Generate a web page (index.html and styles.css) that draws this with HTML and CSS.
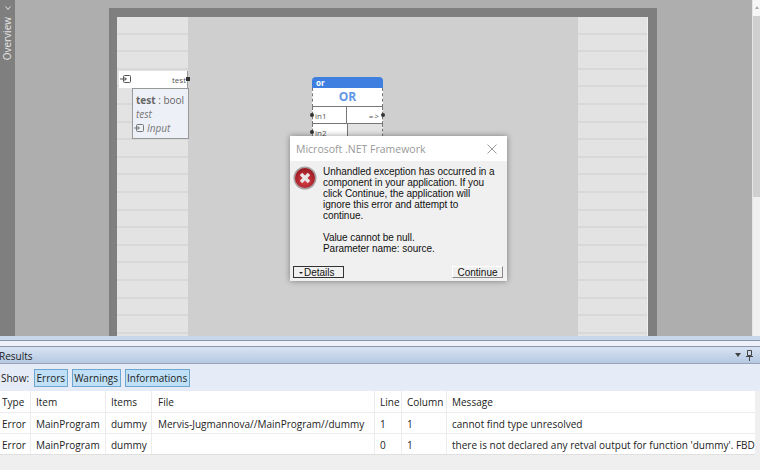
FILE: index.html
```html
<!DOCTYPE html>
<html>
<head>
  <meta charset="utf-8" />
  <title>Results</title>
  <link rel="stylesheet" href="styles.css">
</head>
<body>
  <div class="top">
    <div class="overview">
      <svg class="chev" width="6" height="4" viewBox="0 0 6 4"><path d="M0.500 0.500L3 3.500L5.500 0.500" fill="none" stroke="#e6e6e6"/></svg>
      <span class="overview-label">Overview</span>
    </div>
    <div class="stage">
      <div class="sheet">
        <div class="rail">
          <div class="rail-row"></div><div class="rail-row"></div><div class="rail-row"></div><div class="rail-row"></div><div class="rail-row"></div><div class="rail-row"></div><div class="rail-row"></div><div class="rail-row"></div><div class="rail-row"></div><div class="rail-row"></div><div class="rail-row"></div><div class="rail-row"></div><div class="rail-row"></div><div class="rail-row"></div><div class="rail-row"></div><div class="rail-row"></div><div class="rail-row"></div><div class="rail-row"></div>
        </div>
        <div class="sheet-mid"></div>
        <div class="rail rail-right">
          <div class="rail-row"></div><div class="rail-row"></div><div class="rail-row"></div><div class="rail-row"></div><div class="rail-row"></div><div class="rail-row"></div><div class="rail-row"></div><div class="rail-row"></div><div class="rail-row"></div><div class="rail-row"></div><div class="rail-row"></div><div class="rail-row"></div><div class="rail-row"></div><div class="rail-row"></div><div class="rail-row"></div><div class="rail-row"></div><div class="rail-row"></div><div class="rail-row"></div>
        </div>
      </div>

      <div class="var-row">
        <svg class="port-icon" width="11" height="9" viewBox="0 0 11 9"><rect x="3.500" y="0.500" width="7" height="7" rx="1" fill="none" stroke="#555"/><path d="M0 4h6M4.500 2.500L6.500 4L4.500 5.500" fill="none" stroke="#555"/></svg>
        <span class="var-name">test</span>
        <span class="pin pin-var"></span>
      </div>
      <div class="tip">
        <div><b>test</b> : bool</div>
        <div class="tip-em">test</div>
        <div class="tip-em tip-input">
          <svg class="tip-icon" width="10" height="9" viewBox="0 0 10 9"><rect x="2.500" y="0.500" width="7" height="7" rx="1" fill="none" stroke="#777"/><path d="M0 4h5M3.500 2.500L5.500 4L3.500 5.500" fill="none" stroke="#777"/></svg>
          Input
        </div>
      </div>

      <div class="block">
        <div class="block-head">or</div>
        <div class="block-title">OR</div>
        <div class="block-row">
          <div class="cell">in1<span class="pin pin-l"></span></div>
          <div class="cell cell-out">=&gt;<span class="pin pin-r"></span></div>
        </div>
        <div class="block-row">
          <div class="cell">in2<span class="pin pin-l"></span></div>
          <div class="cell cell-empty"></div>
        </div>
      </div>

      <div class="dialog">
        <div class="dialog-title">
          <span>Microsoft .NET Framework</span>
          <svg width="10" height="10" viewBox="0 0 10 10"><path d="M0.500 0.500L9.500 9.500M9.500 0.500L0.500 9.500" stroke="#9a9a9a"/></svg>
        </div>
        <div class="dialog-body">
          <svg class="err-icon" width="24" height="24" viewBox="0 0 24 24">
            <defs>
              <radialGradient id="errfill" cx="50%" cy="65%" r="60%">
                <stop offset="0" stop-color="#d9414a"/>
                <stop offset="1" stop-color="#9c1a22"/>
              </radialGradient>
            </defs>
            <circle cx="12" cy="12" r="11.500" fill="#a9a0a0"/>
            <circle cx="12" cy="12" r="10" fill="url(#errfill)"/>
            <path d="M8 8L16 16M16 8L8 16" stroke="#e9e6e6" stroke-width="3.400"/>
          </svg>
          <div class="dialog-text">
            <p>Unhandled exception has occurred in a component in your application. If you click Continue, the application will ignore this error and attempt to continue.</p>
            <p>Value cannot be null.<br>Parameter name: source.</p>
          </div>
        </div>
        <div class="dialog-btns">
          <button class="btn btn-details"><span class="caret"></span>Details</button>
          <button class="btn">Continue</button>
        </div>
      </div>
    </div>
    <div class="vscroll">
      <div class="vscroll-btn"><span class="vscroll-arrow"></span></div>
      <div class="vscroll-thumb"></div>
    </div>
  </div>

  <div class="split"></div>

  <div class="results">
    <div class="results-head">
      <span>Results</span>
      <span class="head-tools">
        <span class="head-caret"></span>
        <svg width="7" height="11" viewBox="0 0 7 11"><path d="M1.500 0.500h4v5h-4zM0 6.500h7M3.500 6.500V11" fill="none" stroke="#444"/></svg>
      </span>
    </div>
    <div class="filter">
      <span class="filter-label">Show:</span>
      <button class="chip">Errors</button>
      <button class="chip">Warnings</button>
      <button class="chip">Informations</button>
    </div>
    <div class="grid">
      <div class="c c-type">Type</div><div class="c">Item</div><div class="c">Items</div><div class="c c-file">File</div><div class="c">Line</div><div class="c">Column</div><div class="c">Message</div>
      <div class="c c-type">Error</div><div class="c">MainProgram</div><div class="c">dummy</div><div class="c c-file">Mervis-Jugmannova//MainProgram//dummy</div><div class="c">1</div><div class="c">1</div><div class="c">cannot find type unresolved</div>
      <div class="c c-type">Error</div><div class="c">MainProgram</div><div class="c">dummy</div><div class="c c-file"></div><div class="c">0</div><div class="c">1</div><div class="c">there is not declared any retval output for function 'dummy'. FBD</div>
    </div>
  </div>
</body>
</html>
```

FILE: styles.css
```css
html, body {
  margin: 0;
  width: 760px;
  height: 470px;
  overflow: hidden;
  background: #efefef;
  font-family: "Open Sans", "Noto Sans", sans-serif;
  color: #222;
}
.top {
  display: flex;
  height: 336px;
}
.overview {
  width: 15px;
  background: #7f7f7f;
  color: #e6e6e6;
  font-size: 10px;
  display: flex;
  flex-direction: column;
  align-items: center;
}
.chev {
  margin-top: 6px;
  margin-bottom: 7px;
}
.overview-label {
  writing-mode: vertical-rl;
  transform: rotate(180deg);
  line-height: 15px;
  white-space: nowrap;
}
.stage {
  position: relative;
  flex: 1;
  background: #aeaeae;
  overflow: hidden;
  padding: 8px 95px 0 94px;
}
.vscroll {
  width: 7px;
  background: #f0f0f0;
  border-left: 1px solid #e6e6e6;
}
.vscroll-btn {
  height: 16px;
  background: #f6f6f6;
  display: flex;
  justify-content: center;
  padding-top: 6px;
  box-sizing: border-box;
}
.vscroll-arrow {
  width: 0;
  height: 0;
  border: 2px solid transparent;
  border-bottom: 3px solid #aaa;
  border-top: 0;
}
.vscroll-thumb {
  height: 181px;
  background: #cfcfcf;
}
.sheet {
  display: flex;
  height: 400px;
  border: solid #7f7f7f;
  border-width: 9px 9px 9px 8px;
  background: #cfcfcf;
}
.rail {
  width: 71px;
  background: #e3e3e3;
  overflow: hidden;
}
.rail-right {
  width: 69px;
  border-right: 1px solid #f0f0f0;
}
.sheet-mid {
  flex: 1;
}
.rail-row {
  height: 15.600px;
  border-bottom: 2px solid #d8d8d8;
}
.var-row {
  position: absolute;
  left: 104px;
  top: 71px;
  width: 68px;
  height: 17px;
  background: #fff;
  border-right: 1px solid #999;
  display: flex;
  align-items: center;
  justify-content: space-between;
  font-size: 8px;
  color: #555;
}
.port-icon {
  margin-left: 1px;
}
.var-name {
  margin-right: 1px;
}
.pin {
  position: absolute;
  width: 4px;
  height: 4px;
  border-radius: 50%;
  background: #333;
}
.pin-var {
  right: -3px;
  top: 6px;
  border-radius: 0;
}
.tip {
  position: absolute;
  left: 117px;
  top: 88px;
  width: 52px;
  height: 45px;
  padding: 4px 0 0 3px;
  background: #eef0f7;
  border: 1px solid #999;
  font-size: 10px;
  line-height: 14px;
  color: #666;
}
.tip-em {
  font-style: italic;
  color: #777;
}
.tip-input {
  display: flex;
  align-items: center;
  gap: 3px;
}
.tip-icon {
  margin-left: -2px;
}
.block {
  position: absolute;
  left: 297px;
  top: 77px;
  width: 71px;
  font-size: 8px;
  color: #555;
}
.block-head {
  height: 11px;
  background: #3f7fe0;
  border-radius: 4px 4px 0 0;
  color: #fff;
  font-weight: bold;
  line-height: 12px;
  padding-left: 4px;
}
.block-title {
  height: 18px;
  background: #fff;
  color: #5f95e6;
  font-size: 12px;
  font-weight: bold;
  text-align: center;
  line-height: 18px;
  border: solid #777;
  border-width: 0 1px 1px;
  border-left-style: dashed;
  border-right-style: dashed;
}
.block-row {
  display: flex;
  height: 16px;
  background: #fff;
  border: solid #777;
  border-width: 0 1px 1px;
  border-left-style: dashed;
  border-right-style: dashed;
}
.cell {
  flex: 1;
  position: relative;
  line-height: 17px;
  padding-left: 2px;
}
.cell + .cell {
  border-left: 1px solid #777;
}
.cell-out {
  text-align: right;
  padding-right: 2px;
  letter-spacing: 1px;
}
.cell-empty {
  background: #e3e3e3;
}
.pin-l {
  left: -3px;
  top: 6px;
}
.pin-r {
  right: -3px;
  top: 6px;
}
.dialog {
  position: absolute;
  left: 275px;
  top: 136px;
  width: 217px;
  height: 145px;
  background: #f0f0f0;
  box-shadow: 0 0 6px rgba(0, 0, 0, .4);
  font-family: "Liberation Sans", Arial, sans-serif;
  color: #111;
  display: flex;
  flex-direction: column;
}
.dialog-title {
  height: 25px;
  background: #fff;
  color: #999;
  font-family: "Open Sans", "Noto Sans", sans-serif;
  font-size: 10.500px;
  display: flex;
  align-items: center;
  justify-content: space-between;
  padding: 0 10px 0 6px;
}
.dialog-body {
  flex: 1;
  display: flex;
  padding: 5px 0 0 3px;
  gap: 6px;
}
.err-icon {
  flex: none;
}
.dialog-text {
  font-size: 10px;
  line-height: 11px;
  letter-spacing: -.05px;
  width: 172px;
}
.dialog-text p {
  margin: 0 0 11px;
}
.dialog-btns {
  display: flex;
  justify-content: space-between;
  padding: 0 4px 3px 3px;
}
.btn {
  font: 10px/11px "Liberation Sans", Arial, sans-serif;
  color: #111;
  background: #f0f0f0;
  padding: 0;
  width: 51px;
  height: 12px;
  border: 1px solid #fff;
  border-right-color: #888;
  border-bottom-color: #888;
}
.btn-details {
  border: 1px solid #333;
  text-align: left;
  padding-left: 5px;
}
.caret {
  display: inline-block;
  width: 0;
  height: 0;
  border: 2px solid transparent;
  border-top: 2px solid #222;
  border-bottom: 0;
  vertical-align: middle;
  margin-right: 1px;
}
.split {
  height: 11px;
  box-sizing: border-box;
  background: #eef0fa;
  border-top: 4px solid #c8d8ea;
  border-bottom: 1px solid #8d96ac;
  box-shadow: inset 0 1px 0 #8b93a8;
}
.results-head {
  height: 17px;
  box-sizing: border-box;
  background: linear-gradient(#d8e3f2, #b5c9e3);
  border-bottom: 1px solid #9aa4b8;
  font-size: 10px;
  line-height: 18px;
  margin-left: -1px;
  display: flex;
  justify-content: space-between;
}
.head-tools {
  display: flex;
  align-items: center;
  gap: 5px;
  padding-right: 7px;
}
.head-caret {
  width: 0;
  height: 0;
  border: 3px solid transparent;
  border-top: 4px solid #444;
  border-bottom: 0;
}
.filter {
  height: 27px;
  background: #e6ebf8;
  display: flex;
  align-items: center;
  gap: 4px;
  font-size: 10px;
}
.filter-label {
  margin: 0 1px 0 1px;
}
.chip {
  font: 10px "Open Sans", "Noto Sans", sans-serif;
  color: #222;
  height: 18px;
  padding: 0 1.500px;
  background: #bfe0f7;
  border: 1px solid #6fa6cf;
}
.grid {
  display: grid;
  grid-template-columns: 30px 74px 45px 222px 26px 44px 1fr;
  grid-template-rows: 21px 20px 20px;
  gap: 1px;
  background: #ececec;
  width: 755px;
  border-bottom: 1px solid #e0e0e0;
  font-size: 10px;
}
.c {
  background: #fff;
  line-height: 22px;
  padding-left: 5px;
  white-space: nowrap;
  overflow: hidden;
}
.c-type {
  padding-left: 2px;
}
.c-file {
  padding-left: 6px;
}
```
